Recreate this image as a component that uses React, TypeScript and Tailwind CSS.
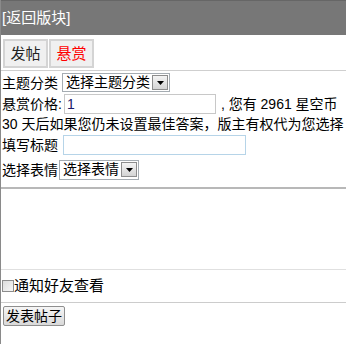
import React from 'react';

const font = "font-['Liberation_Sans','Noto_Sans_CJK_SC',sans-serif]";

const FakeSelect = ({ label, className }: { label: string; className: string }) => (
  <div className={`inline-flex items-center gap-[2px] border border-[#a5acb2] bg-white pl-[3px] pr-[1px] ${className}`}>
    <span className="text-[14px] leading-[17px] text-black whitespace-nowrap">{label}</span>
    <span className="flex items-center justify-center w-[16px] h-[15px] border border-[#8d8d8d] bg-gradient-to-b from-[#f4f4f4] to-[#d4d4d4]">
      <svg width="7" height="4" viewBox="0 0 7 4">
        <path d="M0 0h7L3.5 4z" fill="#000" />
      </svg>
    </span>
  </div>
);

export default function App() {
  return (
    <div className={`w-[346px] h-[344px] bg-white border-l border-[#8a8a8a] text-[14px] leading-[20px] text-black ${font}`}>
      {/* header */}
      <div className="h-[35px] bg-[#777777] border-t border-[#666] flex items-center">
        <span className="text-white text-[15px] leading-[20px] pl-[1px]">[返回版块]</span>
      </div>

      {/* tabs */}
      <div className="flex gap-[1px] pl-[2px] pt-[4px] pb-[2px] border-b border-[#cfcfcf]">
        <button className="w-[45px] h-[29px] border-2 border-[#d4d4d4] bg-[#f0f0f0] text-[15px] text-[#222]">发帖</button>
        <button className="w-[45px] h-[29px] border-2 border-[#d4d4d4] bg-[#f0f0f0] text-[15px] text-[#ff0000]">悬赏</button>
      </div>

      {/* form rows */}
      <div className="pt-[2px] pl-[1px]">
        <div className="flex items-center h-[19px]">
          <span>主题分类</span>
          <FakeSelect label="选择主题分类" className="ml-[4px] h-[19px]" />
        </div>
        <div className="flex items-center h-[21px] mt-[1px]">
          <span>悬赏价格:</span>
          <div className="ml-[2px] w-[152px] h-[20px] border border-[#c8c8c8] bg-white pl-[2px] text-[14px] leading-[18px] text-[#1a1a6a]">1</div>
          <span className="ml-[5px] whitespace-pre">, 您有 2961 星空币</span>
        </div>
        <div className="h-[20px] whitespace-nowrap">30 天后如果您仍未设置最佳答案，版主有权代为您选择</div>
        <div className="flex items-center h-[21px]">
          <span>填写标题</span>
          <div className="ml-[5px] w-[183px] h-[20px] border border-[#b6d4e8] bg-white" />
        </div>
        <div className="flex items-center h-[21px] mt-[4px]">
          <span>选择表情</span>
          <FakeSelect label="选择表情" className="ml-[1px] h-[20px]" />
        </div>
      </div>

      {/* textarea */}
      <div className="mt-[7px] h-[83px] border-t-2 border-b border-t-[#b8b8b8] border-b-[#e0e0e0]" />

      {/* notify */}
      <label className="flex items-center h-[33px] border-b border-[#cccccc]">
        <span className="w-[12px] h-[12px] border border-[#8c8c8c] bg-gradient-to-br from-[#dcdcdc] to-[#f6f6f6] ml-[1px]" />
        <span className="text-[15px]">通知好友查看</span>
      </label>

      {/* submit */}
      <div className="pt-[3px] pl-[2px]">
        <button className="h-[20px] px-[2px] border border-[#8f8f8f] rounded-[2px] bg-gradient-to-b from-[#f6f6f6] to-[#d9d9d9] text-[14px] leading-[16px]">发表帖子</button>
      </div>
    </div>
  );
}
